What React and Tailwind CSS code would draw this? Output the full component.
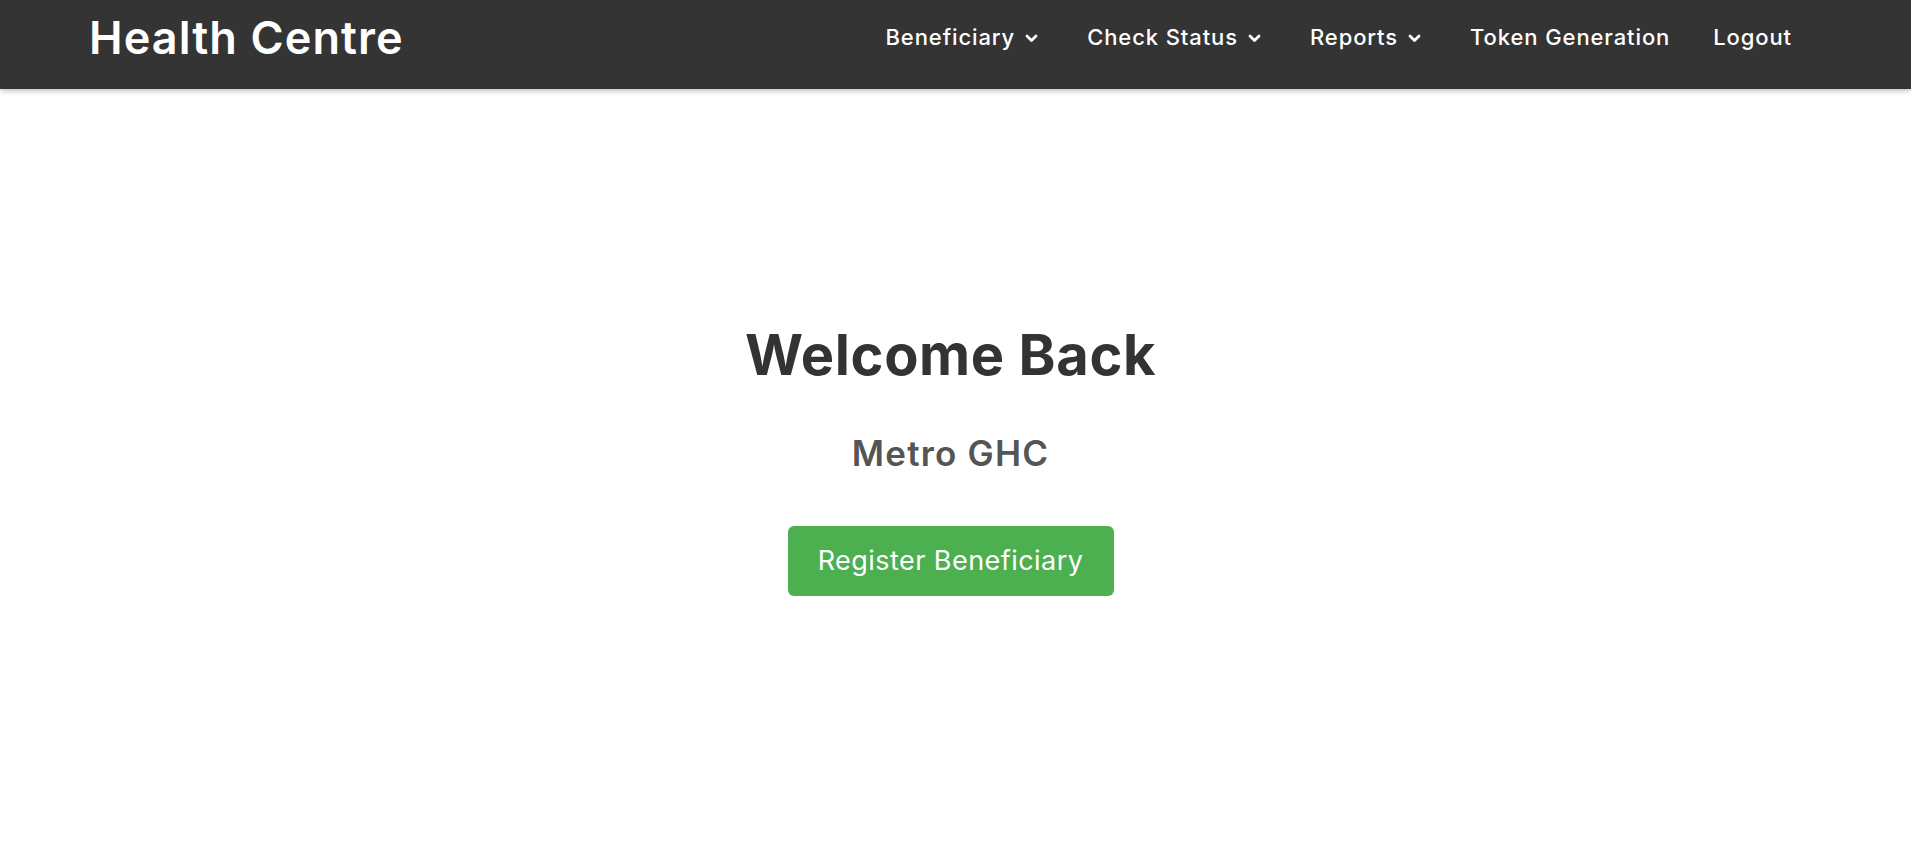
import React from "react";

function Chevron() {
  return (
    <svg width="13" height="9" viewBox="0 0 13 9" className="ml-[10px] mt-[2px]" fill="none">
      <polyline points="2,2 6.5,6.5 11,2" stroke="white" strokeWidth="2.8" strokeLinecap="round" strokeLinejoin="round" />
    </svg>
  );
}

function NavItem({ label, dropdown }) {
  return (
    <a className="flex items-center text-white text-[22px] font-medium tracking-[0.9px] cursor-pointer">
      <span>{label}</span>
      {dropdown && <Chevron />}
    </a>
  );
}

export default function App() {
  return (
    <div className="min-h-screen bg-white" style={{ fontFamily: "Inter, 'Noto Sans', sans-serif" }}>
      <header className="h-[89px] bg-[#343434] flex items-center justify-between pl-[89px] pr-[119px] pb-[14px] shadow-[0_2px_5px_rgba(0,0,0,0.25)] relative z-10">
        <h1 className="text-white text-[45px] font-semibold tracking-[1.1px]">Health Centre</h1>
        <nav className="flex items-center gap-[49px]">
          <NavItem label="Beneficiary" dropdown />
          <NavItem label="Check Status" dropdown />
          <NavItem label="Reports" dropdown />
          <NavItem label="Token Generation" />
          <div className="-ml-[6px]">
            <NavItem label="Logout" />
          </div>
        </nav>
      </header>
      <main className="flex flex-col items-center pt-[238px] pr-[10px]">
        <h2 className="text-[#333333] text-[56px] font-bold leading-none tracking-[0.6px]">Welcome Back</h2>
        <h3 className="mt-[53px] text-[#555555] text-[35px] font-semibold leading-none tracking-[1.2px]">Metro GHC</h3>
        <button className="mt-[55px] w-[326px] h-[70px] bg-[#4caf50] rounded-[6px] text-white text-[27px] font-normal tracking-[0.45px]">
          Register Beneficiary
        </button>
      </main>
    </div>
  );
}
